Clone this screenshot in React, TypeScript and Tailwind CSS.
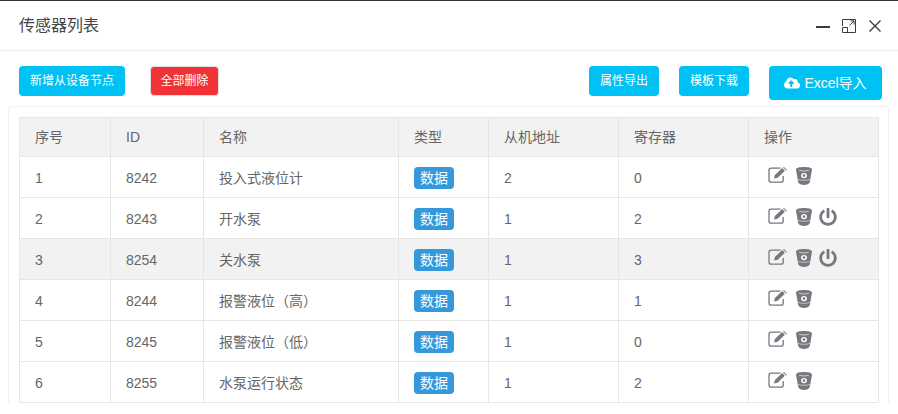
import { FaCloudUploadAlt, FaPowerOff } from 'react-icons/fa'

type Sensor = {
  no: number
  id: number
  name: string
  addr: number
  reg: number
  power?: boolean
  active?: boolean
}

const sensors: Sensor[] = [
  { no: 1, id: 8242, name: '投入式液位计', addr: 2, reg: 0 },
  { no: 2, id: 8243, name: '开水泵', addr: 1, reg: 2, power: true },
  { no: 3, id: 8254, name: '关水泵', addr: 1, reg: 3, power: true, active: true },
  { no: 4, id: 8244, name: '报警液位（高）', addr: 1, reg: 1 },
  { no: 5, id: 8245, name: '报警液位（低）', addr: 1, reg: 0 },
  { no: 6, id: 8255, name: '水泵运行状态', addr: 1, reg: 2 },
]

const headers = ['序号', 'ID', '名称', '类型', '从机地址', '寄存器', '操作']

function EditIcon() {
  return (
    <svg width="20" height="16" viewBox="0 0 20 16" className="mb-[1px] mr-[8px] shrink-0">
      <path
        d="M12.5 1.2H3.2C1.9 1.2 1 2.1 1 3.4V13C1 14.3 1.9 15.2 3.2 15.2H13C14.3 15.2 15.2 14.3 15.2 13V9"
        fill="none"
        stroke="#77777f"
        strokeWidth="1.3"
      />
      <path fill="#77777f" d="M6 11.5L6.9 8L14.2 1L16.9 3.7L9.6 10.7Z" />
      <path fill="#77777f" d="M15 .2L16 0L18.8 2.7L18.5 3.8Z" />
    </svg>
  )
}

function BucketIcon() {
  return (
    <svg width="16" height="18" viewBox="0 0 16 18" className="shrink-0">
      <path
        fill="#77777f"
        d="M8 0C12 0 16 .8 16 2.6C16 3.2 15.4 6 14.8 9.5C14.4 12 14 14 13.8 15C13.4 17 10.5 18 8 18C5.5 18 2.6 17 2.2 15C2 14 1.6 12 1.2 9.5C.6 6 0 3.2 0 2.6C0 .8 4 0 8 0Z"
      />
      <ellipse cx="8" cy="8.6" rx="2.9" ry="2.7" fill="#fff" />
      <circle cx="8" cy="8.6" r="1.3" fill="#77777f" />
      <path d="M2 12.4C5 13.6 11 13.6 14 12.4" fill="none" stroke="#fff" strokeOpacity="0.6" strokeWidth="0.9" />
      <path d="M3.2 3.2C5.5 4.2 10.5 4.2 12.8 3.2" fill="none" stroke="#fff" strokeOpacity="0.8" strokeWidth="0.8" />
    </svg>
  )
}

function WindowControls() {
  return (
    <div className="flex items-center text-[#3b3b4a]">
      <svg width="14" height="14" viewBox="0 0 14 14" className="mr-[12px]">
        <rect x="0" y="7" width="14" height="2" fill="currentColor" />
      </svg>
      <svg width="14" height="14" viewBox="0 0 14 14" className="mr-[13px]">
        <path
          d="M.5 7V.5H13.5V13.5H.5V8.5H5.5V13.5M7.5 6.5L12 2M8.5 1.9H12V5.5"
          fill="none"
          stroke="currentColor"
          strokeWidth="1"
        />
      </svg>
      <svg width="12" height="12" viewBox="0 0 12 12">
        <path d="M.5 .5L11.5 11.5M11.5 .5L.5 11.5" stroke="currentColor" strokeWidth="1.4" />
      </svg>
    </div>
  )
}

export default function App() {
  return (
    <div className="h-[414px] w-[898px] overflow-hidden border-t border-[#333] bg-white font-['Liberation_Sans','Noto_Sans_CJK_SC',sans-serif] text-[#666]">
      <div className="flex h-[50px] items-center justify-between border-b border-[#eee] pl-[19px] pr-[17px]">
        <h1 className="text-base font-normal text-[#444]">传感器列表</h1>
        <WindowControls />
      </div>

      <div className="flex h-[55px] items-start pl-[19px] pr-[16px] pt-[15px]">
        <button className="h-[30px] w-[106px] rounded-[4px] bg-[#00c1f3] text-xs text-white">
          新增从设备节点
        </button>
        <button className="ml-[25px] h-[30px] w-[69px] rounded-[4px] border border-[#ddd] bg-[#f13237] text-xs text-white">
          全部删除
        </button>
        <button className="ml-auto h-[30px] w-[70px] rounded-[4px] bg-[#00c1f3] text-xs text-white">
          属性导出
        </button>
        <button className="ml-[20px] h-[30px] w-[70px] rounded-[4px] bg-[#00c1f3] text-xs text-white">
          模板下载
        </button>
        <button className="ml-[20px] flex h-[34px] w-[113px] items-center justify-center gap-[4px] rounded-[4px] bg-[#00c1f3] text-sm text-white">
          <FaCloudUploadAlt size={16} />
          Excel导入
        </button>
      </div>

      <div className="ml-[8px] mr-[9px] rounded-t-[4px] border border-b-0 border-[#f0f0f0] pl-[10px] pt-[10px]">
        <table className="w-[860px] table-fixed border-collapse text-sm">
          <colgroup>
            <col className="w-[91px]" />
            <col className="w-[93px]" />
            <col className="w-[195px]" />
            <col className="w-[90px]" />
            <col className="w-[130px]" />
            <col className="w-[130px]" />
            <col className="w-[130px]" />
          </colgroup>
          <thead>
            <tr className="h-[39px] bg-[#f2f2f2]">
              {headers.map((h) => (
                <th key={h} className="border border-[#e6e6e6] px-[15px] text-left font-normal">
                  {h}
                </th>
              ))}
            </tr>
          </thead>
          <tbody>
            {sensors.map((s) => (
              <tr key={s.id} className={`h-[41px] ${s.active ? 'bg-[#f2f2f2]' : 'bg-white'}`}>
                <td className="border border-[#e6e6e6] px-[15px] pt-[2px]">{s.no}</td>
                <td className="border border-[#e6e6e6] px-[15px] pt-[2px]">{s.id}</td>
                <td className="border border-[#e6e6e6] px-[15px] pt-[2px]">{s.name}</td>
                <td className="border border-[#e6e6e6] px-[15px] pt-[2px]">
                  <span className="inline-flex h-[22px] w-[40px] items-center justify-center rounded-[4px] bg-[#3498db] text-sm text-white">
                    数据
                  </span>
                </td>
                <td className="border border-[#e6e6e6] px-[15px] pt-[2px]">{s.addr}</td>
                <td className="border border-[#e6e6e6] px-[15px] pt-[2px]">{s.reg}</td>
                <td className="border border-[#e6e6e6] pl-[19px]">
                  <div className="mb-[3px] flex items-center text-[#77777f]">
                    <EditIcon />
                    <BucketIcon />
                    {s.power && <FaPowerOff size={18} className="ml-[7px]" />}
                  </div>
                </td>
              </tr>
            ))}
          </tbody>
        </table>
      </div>
    </div>
  )
}
